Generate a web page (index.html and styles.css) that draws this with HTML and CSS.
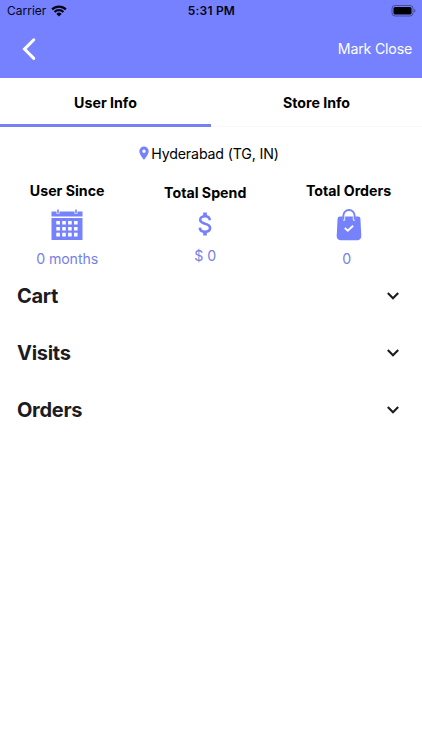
FILE: index.html
```
<!DOCTYPE html>
<html lang="en">
<head>
    <meta charset="UTF-8">
    <meta name="viewport" content="width=device-width, initial-scale=1.0">
    <title>User Info</title>
    <link rel="stylesheet" href="styles.css">
</head>
<body>
    <header>
        <div class="status-bar">
            <div class="carrier">
                <span>Carrier</span>
                <svg width="16" height="12" viewBox="0 0 16 12">
                    <path d="M1.1 4.4a9.8 9.8 0 0 1 13.8 0M3.6 7a6.3 6.3 0 0 1 8.8 0" fill="none" stroke="#050514" stroke-width="2.3"/>
                    <path d="M5.4 8.9a3.7 3.7 0 0 1 5.2 0L8 11.6z" fill="#050514"/>
                </svg>
            </div>
            <span class="time">5:31 PM</span>
            <div class="battery">
                <svg width="25" height="12" viewBox="0 0 25 12">
                    <rect x="1" y=".5" width="21" height="10.5" rx="3" fill="none" stroke="#464d99"/>
                    <rect x="2.5" y="2" width="18" height="7.5" rx="1.6" fill="#000"/>
                    <path d="M23.2 4v3.6q1.2-.5 1.2-1.8T23.2 4z" fill="#464d99"/>
                </svg>
            </div>
        </div>
        <div class="nav-bar">
            <svg width="14" height="24" viewBox="0 0 14 24">
                <path d="M11.8 2.8 2.5 12.1l9.3 9.3" fill="none" stroke="#fff" stroke-width="3" stroke-linecap="round"/>
            </svg>
            <span class="mark-close">Mark Close</span>
        </div>
    </header>

    <nav class="tabs">
        <div class="tab active">User Info</div>
        <div class="tab">Store Info</div>
    </nav>

    <main>
        <div class="location">
            <svg width="10" height="14" viewBox="0 0 10 14">
                <path d="M5 .5A4.7 4.7 0 0 0 .3 5.2C.3 8.7 5 13.7 5 13.7s4.7-5 4.7-8.5A4.7 4.7 0 0 0 5 .5zm0 6.4a1.7 1.7 0 1 1 0-3.4 1.7 1.7 0 0 1 0 3.4z" fill="#7681fc"/>
            </svg>
            <span>Hyderabad (TG, IN)</span>
        </div>

        <div class="stats">
            <div class="stat since">
                <h3>User Since</h3>
                <svg width="32" height="32" viewBox="0 0 32 32">
                    <path d="M.5 2.5h5v2.2h3V2.5h15v2.2h3V2.5h5v5H.5zM.5 9h31v22H.5z" fill="#7681fc"/>
                    <path d="M7 .5v3.7M25 .5v3.7" stroke="#7681fc" stroke-width="1.6"/>
                    <path d="M5.3 13.8h21.4M5.3 19.7h21.4M5.3 25.6h21.4" stroke="#fff" stroke-width="3.6" stroke-dasharray="3.6 2.3"/>
                </svg>
                <p>0 months</p>
            </div>
            <div class="stat spend">
                <h3>Total Spend</h3>
                <svg width="16" height="24" viewBox="0 0 16 24">
                    <path d="M12.8 8.2C12.7 5.7 11 4.3 8 4.3c-3 0-4.8 1.3-4.8 3.5C3.2 10 5 10.9 8 11.7c3.5.9 5.1 2.1 5.1 4.4 0 2.3-1.9 3.7-5.1 3.7-3.4 0-5.1-1.6-5.2-4.2" fill="none" stroke="#7681fc" stroke-width="2.6"/>
                    <path d="M8 .5v4M8 19.5v4" stroke="#7681fc" stroke-width="3.7"/>
                </svg>
                <p>$ 0</p>
            </div>
            <div class="stat orders">
                <h3>Total Orders</h3>
                <svg width="26" height="32" viewBox="0 0 26 32">
                    <path d="M3.8 7.5h18.4a2.2 2.2 0 0 1 2.2 2l.9 17.5a4 4 0 0 1-4 4.3H4.7a4 4 0 0 1-4-4.3l.9-17.5a2.2 2.2 0 0 1 2.2-2z" fill="#7681fc"/>
                    <path d="M8 10.5V7.5M18 10.5V7.5" stroke="#fff" stroke-width="2.4" stroke-linecap="round"/>
                    <path d="M7.4 10.8V6.6a5.6 5.6 0 0 1 11.2 0v4.2" fill="none" stroke="#7681fc" stroke-width="1.9"/>
                    <path d="m8.8 19 3 2.7 5.3-5" fill="none" stroke="#fff" stroke-width="1.9"/>
                </svg>
                <p>0</p>
            </div>
        </div>

        <section class="accordion">
            <div class="accordion-item">
                <h2>Cart</h2>
                <svg width="14" height="10" viewBox="0 0 14 10"><path d="m1.8 2 5.2 5.2L12.2 2" fill="none" stroke="#1c1b1f" stroke-width="2.1"/></svg>
            </div>
            <div class="accordion-item">
                <h2>Visits</h2>
                <svg width="14" height="10" viewBox="0 0 14 10"><path d="m1.8 2 5.2 5.2L12.2 2" fill="none" stroke="#1c1b1f" stroke-width="2.1"/></svg>
            </div>
            <div class="accordion-item">
                <h2>Orders</h2>
                <svg width="14" height="10" viewBox="0 0 14 10"><path d="m1.8 2 5.2 5.2L12.2 2" fill="none" stroke="#1c1b1f" stroke-width="2.1"/></svg>
            </div>
        </section>
    </main>
</body>
</html>
```
FILE: styles.css
```
* {
    box-sizing: border-box;
}
body {
    margin: 0;
    font-family: Inter, "Liberation Sans", sans-serif;
    background-color: #fff;
    color: #000;
}
h2, h3, p {
    margin: 0;
}
svg {
    display: block;
    flex-shrink: 0;
}
header {
    height: 77.5px;
    background-color: #7581ff;
}
.status-bar {
    display: grid;
    grid-template-columns: 1fr auto 1fr;
    align-items: center;
    height: 21px;
    padding: 0 6px 0 7px;
    font-size: 12px;
    color: #050514;
}
.carrier {
    display: flex;
    align-items: center;
    gap: 5px;
}
.time {
    font-weight: 600;
    letter-spacing: 0.2px;
}
.battery {
    display: flex;
    justify-content: flex-end;
}
.nav-bar {
    display: flex;
    align-items: center;
    justify-content: space-between;
    height: 56px;
    padding: 0 10px 0 22px;
}
.mark-close {
    padding-bottom: 1px;
    color: #fff;
    font-size: 14.2px;
    line-height: 18px;
    letter-spacing: -0.2px;
}
.tabs {
    display: flex;
    height: 49.5px;
    border-bottom: 1px solid #f8f8f8;
}
.tab {
    flex: 1;
    height: 49px;
    border-bottom: 3px solid transparent;
    text-align: center;
    line-height: 49px;
    font-size: 14.2px;
    font-weight: 700;
}
.tab.active {
    border-color: #7681f4;
}
.location {
    display: flex;
    justify-content: center;
    align-items: center;
    gap: 2px;
    margin: 16px 4px 0 0;
    height: 20px;
    font-size: 14.2px;
    letter-spacing: -0.15px;
}
.stats {
    display: flex;
    justify-content: space-around;
    align-items: center;
    height: 90px;
    margin-top: 16px;
    padding-right: 1px;
}
.stat {
    display: flex;
    flex-direction: column;
    align-items: center;
}
.stat h3 {
    font-size: 14.2px;
    font-weight: 700;
    line-height: 20px;
    white-space: nowrap;
}
.stat p {
    color: #7681e8;
    font-size: 14.2px;
    letter-spacing: -0.1px;
    line-height: 20px;
}
.since,
.orders {
    padding-top: 1px;
}
.since svg,
.orders svg {
    margin: 8px 0;
}
.spend svg {
    margin: 9.5px 0;
}
.orders p {
    margin-right: 4px;
}
.accordion {
    margin-top: -1.5px;
    padding: 0 22px 0 17px;
}
.accordion-item {
    display: flex;
    justify-content: space-between;
    align-items: center;
    height: 57px;
}
.accordion-item h2 {
    color: #1c1b1f;
    font-size: 20px;
    font-weight: 700;
    letter-spacing: -0.3px;
}
```
